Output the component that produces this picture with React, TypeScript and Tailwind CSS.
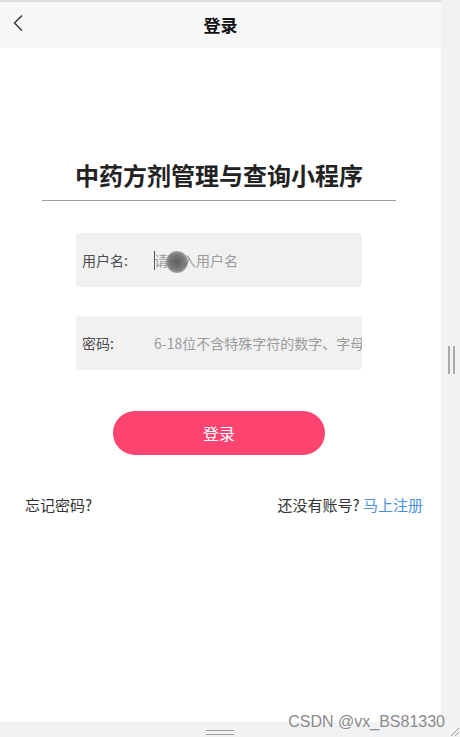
import React from 'react';

const cjk = { fontFamily: '"Noto Sans CJK SC", "Noto Sans", sans-serif' };

function Field({ label, placeholder, caret }: { label: string; placeholder: string; caret?: boolean }) {
  return (
    <div className="ml-[76px] w-[286px] h-[54px] bg-[#f1f1f1] rounded-[4px] flex items-center pl-[6px] overflow-hidden relative">
      <span className="w-[72px] shrink-0 text-[14px] text-[#4d4d4d]">{label}</span>
      <span className="relative whitespace-nowrap text-[14px] text-[#9b9b9b]">
        {caret && <span className="absolute left-0 top-[1px] h-[19px] border-l border-[#555]" />}
        {placeholder}
      </span>
      {caret && (
        <span className="absolute left-[90px] top-[18px] w-[22px] h-[22px] rounded-full bg-[radial-gradient(circle,rgba(90,90,90,0.95)_0%,rgba(110,110,110,0.85)_55%,rgba(150,150,150,0)_100%)]" />
      )}
    </div>
  );
}

export default function App() {
  return (
    <div className="relative w-[460px] h-[737px] overflow-hidden bg-[#f1f2f4] flex flex-col" style={cjk}>
      <div className="flex flex-1">
        <div className="w-[441px] bg-white flex flex-col border-t-2 border-[#dedede]">
          <div className="h-[46px] bg-[#f7f7f7] relative flex items-center justify-center">
            <svg className="absolute left-[12px] top-[12px]" width="12" height="18" viewBox="0 0 12 18" fill="none">
              <path d="M10 1.5 L2.5 9 L10 16.5" stroke="#333" strokeWidth="1.4" />
            </svg>
            <span className="text-[17px] font-bold text-[#111]">登录</span>
          </div>

          <div className="mt-[110px] ml-[42px] w-[354px] border-b border-[#9e9e9e] pb-[8px] text-center">
            <span className="text-[24px] leading-[34px] font-bold text-[#222]">中药方剂管理与查询小程序</span>
          </div>

          <div className="mt-[32px]">
            <Field label="用户名:" placeholder="请输入用户名" caret />
          </div>
          <div className="mt-[29px]">
            <Field label="密码:" placeholder="6-18位不含特殊字符的数字、字母" />
          </div>

          <button className="mt-[41px] ml-[113px] w-[212px] h-[44px] rounded-full bg-[#fd4370] text-white text-[16px]">
            登录
          </button>

          <div className="mt-[39px] flex justify-between pl-[25px] pr-[18px] text-[15px] leading-[22px] text-[#333]">
            <span>忘记密码?</span>
            <span>
              还没有账号? <span className="text-[#4a8fe0]">马上注册</span>
            </span>
          </div>
        </div>
        <div className="w-[19px] pt-[346px] pl-[7px]">
          <div className="w-[7px] h-[28px] flex justify-between">
            <span className="w-[2px] h-full bg-[#a9a9a9]" />
            <span className="w-[2px] h-full bg-[#a9a9a9]" />
          </div>
        </div>
      </div>
      <div className="h-[15px] flex justify-center pt-[8px] pr-[20px]">
        <div className="w-[28px] h-[5px] border-y-[1.5px] border-[#9a9a9a]" />
      </div>

      <svg className="absolute right-0 bottom-0" width="12" height="12" viewBox="0 0 12 12">
        <path d="M11 3 L3 11 M11 7 L7 11" stroke="#999" strokeWidth="1" />
      </svg>
      <span
        className="absolute right-[15px] bottom-[6px] text-[16px] leading-[18px] text-[#8a8a8a]"
        style={{ fontFamily: '"Liberation Sans", Arial, sans-serif' }}
      >
        CSDN @vx_BS81330
      </span>
    </div>
  );
}
